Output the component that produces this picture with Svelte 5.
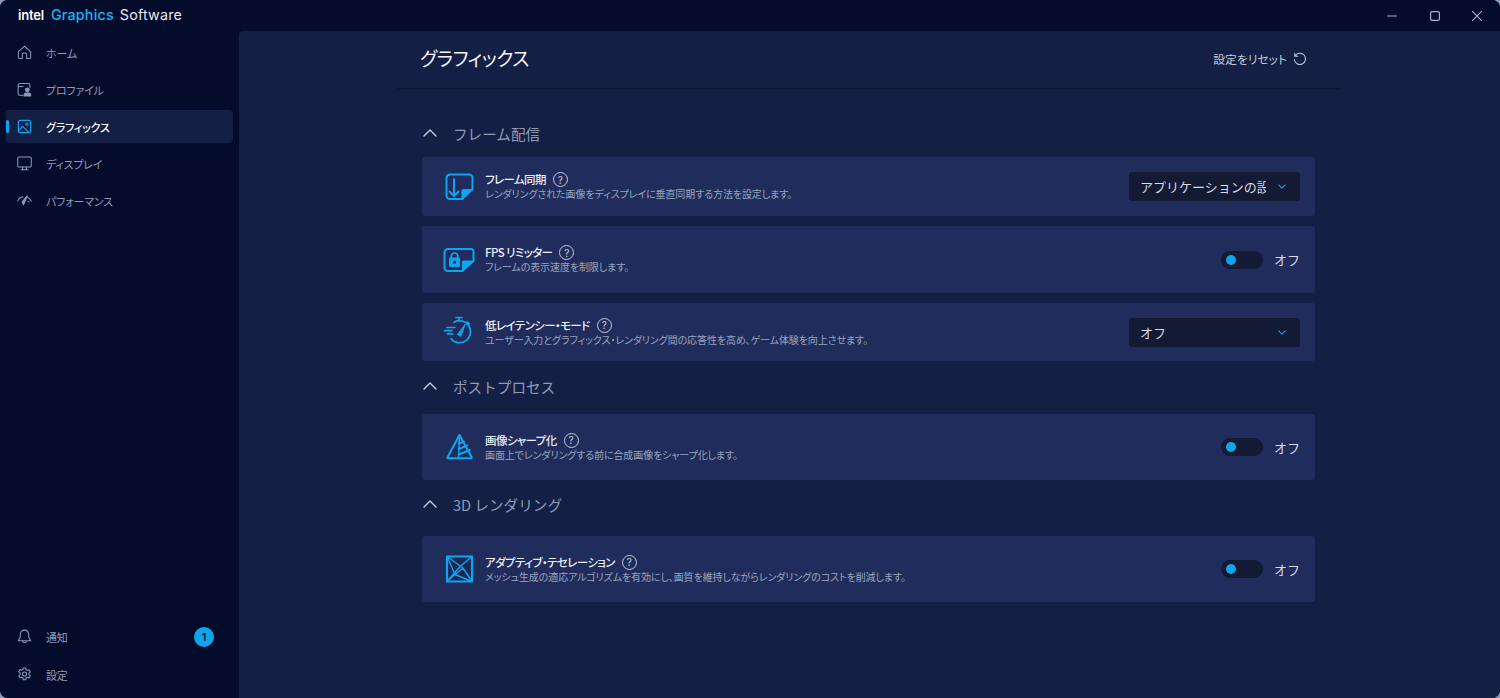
<script lang="ts">
  const nav = [
    { id: 'home', label: 'ホーム' },
    { id: 'profile', label: 'プロファイル' },
    { id: 'graphics', label: 'グラフィックス', active: true },
    { id: 'display', label: 'ディスプレイ' },
    { id: 'perf', label: 'パフォーマンス' }
  ];

  const sections = [
    {
      title: 'フレーム配信',
      rows: [
        { icon: 'sync', name: 'フレーム同期', desc: 'レンダリングされた画像をディスプレイに垂直同期する方法を設定します。', select: 'アプリケーションの設', h: 'h59' },
        { icon: 'fps', name: 'FPS リミッター', desc: 'フレームの表示速度を制限します。', h: 'h67' },
        { icon: 'latency', name: '低レイテンシー・モード', desc: 'ユーザー入力とグラフィックス・レンダリング間の応答性を高め、ゲーム体験を向上させます。', select: 'オフ', h: 'h58' }
      ]
    },
    {
      title: 'ポストプロセス',
      rows: [{ icon: 'sharp', name: '画像シャープ化', desc: '画面上でレンダリングする前に合成画像をシャープ化します。', h: 'h66' }]
    },
    {
      title: '3D レンダリング',
      rows: [{ icon: 'tess', name: 'アダプティブ・テセレーション', desc: 'メッシュ生成の適応アルゴリズムを有効にし、画質を維持しながらレンダリングのコストを削減します。', h: 'h66' }]
    }
  ];
</script>

{#snippet navIcon(id)}
  <svg class="nav-icon" viewBox="0 0 16 16" fill="none" stroke="currentColor" stroke-width="1.1" stroke-linejoin="round" stroke-linecap="round">
    {#if id === 'home'}
      <path d="M1.5 7 8 1.2 14.5 7v6.3a1.2 1.2 0 0 1-1.2 1.2H10.300V10a1.500 1.500 0 0 0-1.500-1.500H7.200A1.500 1.500 0 0 0 5.700 10v4.500H2.700a1.200 1.200 0 0 1-1.200-1.200z" />
    {:else if id === 'profile'}
      <path d="M6.500 14.200H3a1.800 1.800 0 0 1-1.800-1.800V3.500A1.800 1.800 0 0 1 3 1.700h9a1.800 1.800 0 0 1 1.800 1.800v2.200M1.200 4.700h5.300" />
      <circle cx="11" cy="8.300" r="2" fill="currentColor" />
      <path d="M7.600 14.800v-1.300c0-1 .8-1.800 1.800-1.800h3.400c1 0 1.800.8 1.800 1.800v1.300z" fill="currentColor" />
    {:else if id === 'graphics'}
      <rect x="1.500" y="1.500" width="13" height="13" rx="1.800" stroke-width="1.300" />
      <circle cx="10.500" cy="5.500" r="1.200" />
      <path d="M1.800 12 6 7.800l6.700 6.500" stroke-width="1.300" />
    {:else if id === 'display'}
      <rect x="0.800" y="1" width="14.400" height="10.800" rx="1.500" />
      <path d="M6 11.800v2.700M10 11.800v2.700M4.300 14.700h7.400" />
    {:else if id === 'perf'}
      <path d="M0.800 8.500C2 6 4 4.300 6.500 4M10.500 4.200c2 .5 3.600 2 4.700 4.300" />
      <path d="M7 12.500 11 3 5.500 9.500z" fill="currentColor" />
      <path d="M13 9.500l-1.300-.7" />
    {/if}
  </svg>
{/snippet}

{#snippet rowIcon(id)}
  <svg class="row-icon" viewBox="0 0 32 32" fill="none" stroke="#0ea5ef" stroke-width="2" stroke-linejoin="round" stroke-linecap="round">
    {#if id === 'sync'}
      <path d="M19 28H7a3.500 3.500 0 0 1-3.500-3.500V7A3.500 3.500 0 0 1 7 3.500h19A3.500 3.500 0 0 1 29.500 7v11z" />
      <path d="M29.500 18.500h-9a1.500 1.500 0 0 0-1.500 1.500v8z" fill="#0ea5ef" stroke-width="1.200" />
      <path d="M11 8v17M6.500 20.500 11 25l4.500-4.500" />
    {:else if id === 'fps'}
      <path d="M19 27H5a3.500 3.500 0 0 1-3.500-3.500v-15A3.500 3.500 0 0 1 5 5h23a2.500 2.500 0 0 1 2.500 2.500V17z" />
      <path d="M30.500 17h-10a1 1 0 0 0-1 1v9z" fill="#0ea5ef" stroke-width="1.200" />
      <rect x="6" y="13.500" width="11" height="9.500" rx="1.300" fill="#0ea5ef" stroke="none" />
      <path d="M8.300 14v-1.800a3.200 3.200 0 0 1 6.400 0V14" stroke-width="1.700" />
      <circle cx="11.500" cy="18.200" r="1.500" fill="#202d5c" stroke="none" />
    {:else if id === 'latency'}
      <path d="M13 1.500h6M16 1.500v3.500M24.500 6l1.800 1.800M11 6.200A11 11 0 1 1 8 22.700" stroke-width="1.700" />
      <path d="M4 11.500h8M1.500 14.700h7.500M4.500 17.800h5" stroke-width="1.700" />
      <path d="M22 8.500 14.500 18.500l3 1.800z" fill="#0ea5ef" stroke-width="1" />
    {:else if id === 'sharp'}
      <path d="M16.500 4 4.500 26.300a.7.7 0 0 0 .6 1h23a.7.7 0 0 0 .6-1z" />
      <path d="M16.500 4 15.500 27" stroke-width="1.500" />
      <path d="M16 12.500l5-2M16 18l8.300-3.500M15.800 23.500l11-4.500" stroke-width="1.900" />
    {:else if id === 'tess'}
      <rect x="4" y="3.500" width="25" height="25" fill="#1b2753" stroke-width="2.200" />
      <path d="M4 3.500 20 15 29 28.500M29 3.500 17 13.500 4 28.500M4 3.500 12 21.500 29 28.500M4 28.500 12 21.500 20 15" stroke-width="1.400" />
    {/if}
  </svg>
{/snippet}

{#snippet help()}
  <span class="help">?</span>
{/snippet}

<div class="window">
  <aside class="sidebar">
    <div class="brand">
      <span class="intel">intel</span>
      <span class="graphics">Graphics</span>
      <span class="software">Software</span>
    </div>
    <nav class="nav">
      {#each nav as item}
        <div class="nav-item" class:active={item.active}>
          {@render navIcon(item.id)}
          <span>{item.label}</span>
        </div>
      {/each}
    </nav>
    <div class="nav bottom">
      <div class="nav-item">
        <svg class="nav-icon" viewBox="0 0 16 16" fill="none" stroke="currentColor" stroke-width="1.100" stroke-linejoin="round" stroke-linecap="round">
          <path d="M8 1.200c-2.800 0-4.500 2-4.500 4.600v3L1.300 12.500h13.400L12.500 8.800v-3C12.500 3.200 10.800 1.200 8 1.200zM6 12.700a2 2 0 0 0 4 0" />
        </svg>
        <span>通知</span>
        <span class="badge">1</span>
      </div>
      <div class="nav-item">
        <svg class="nav-icon" viewBox="0 0 16 16" fill="none" stroke="currentColor" stroke-width="1.100" stroke-linejoin="round">
          <path d="M6.700 1h2.600l.4 2 1.300.7 1.900-.7 1.300 2.300-1.500 1.300v1.500l1.500 1.300-1.300 2.300-1.900-.7-1.300.7-.4 2H6.700l-.4-2-1.300-.7-1.900.7-1.300-2.300 1.500-1.300V6.300L1.800 5l1.300-2.300 1.900.7 1.300-.7z" />
          <circle cx="8" cy="7.500" r="2.200" />
        </svg>
        <span>設定</span>
      </div>
    </div>
  </aside>

  <div class="right">
    <div class="titlebar">
      <svg viewBox="0 0 10 10" class="win"><path d="M0 5h10" /></svg>
      <svg viewBox="0 0 10 10" class="win"><rect x="0.600" y="0.600" width="8.800" height="8.800" rx="1.500" /></svg>
      <svg viewBox="0 0 10 10" class="win"><path d="M0 0l10 10M10 0 0 10" /></svg>
    </div>
    <main class="content">
      <header class="head">
        <h1>グラフィックス</h1>
        <button type="button" class="reset">
          設定をリセット
          <svg viewBox="0 0 16 16" width="15" height="15" fill="none" stroke="currentColor" stroke-width="1.100" stroke-linecap="round" stroke-linejoin="round">
            <path d="M3 2.500v3.200h3.200M3.200 5.500A6 6 0 1 1 2.500 9" />
          </svg>
        </button>
      </header>

      <div class="sections">
        {#each sections as section}
          <section class="section">
            <div class="section-title">
              <svg viewBox="0 0 14 8" width="14" height="8" fill="none" stroke="#c8d0e0" stroke-width="1.400" stroke-linecap="round" stroke-linejoin="round">
                <path d="M1 7l6-6 6 6" />
              </svg>
              <span>{section.title}</span>
            </div>
            {#each section.rows as row}
              <div class="card {row.h}">
                {@render rowIcon(row.icon)}
                <div class="text">
                  <div class="name">{row.name}{@render help()}</div>
                  <div class="desc">{row.desc}</div>
                </div>
                {#if row.select}
                  <div class="select">
                    <span class="select-value">{row.select}</span>
                    <svg viewBox="0 0 10 6" width="8" height="5" fill="none" stroke="#0ea5ef" stroke-width="1.300" stroke-linecap="round" stroke-linejoin="round"><path d="M1 1l4 4 4-4" /></svg>
                  </div>
                {:else}
                  <div class="toggle-wrap">
                    <span class="toggle"><span class="knob"></span></span>
                    <span>オフ</span>
                  </div>
                {/if}
              </div>
            {/each}
          </section>
        {/each}
      </div>
    </main>
  </div>
</div>

<style>
  :global(body) {
    margin: 0;
    background: #8a9bb5;
    font-family: "Noto Sans CJK JP", "Noto Sans", sans-serif;
  }

  .window {
    width: 1500px;
    height: 698px;
    display: grid;
    grid-template-columns: 239px 1fr;
    background: #050b2b;
    border-radius: 8px;
    overflow: hidden;
    font-feature-settings: "palt";
  }

  .sidebar {
    display: flex;
    flex-direction: column;
    background: #050b2b;
    min-height: 0;
  }

  .brand {
    height: 31px;
    padding-left: 18px;
    display: flex;
    align-items: center;
    gap: 6px;
    font-family: Inter, "Noto Sans", sans-serif;
    font-size: 14.300px;
    line-height: 1;
    letter-spacing: 0.2px;
  }

  .intel {
    color: #fff;
    font-size: 13px;
    font-weight: 600;
    letter-spacing: -0.2px;
    margin-right: 1px;
  }

  .graphics {
    color: #12b5f2;
    font-weight: 500;
  }

  .software {
    color: #e4e7ef;
  }

  .nav {
    display: flex;
    flex-direction: column;
    gap: 4px;
    padding: 5px 6px 0;
  }

  .nav.bottom {
    margin-top: auto;
    padding-top: 0;
    padding-bottom: 7px;
    gap: 5px;
  }

  .nav-item {
    position: relative;
    height: 33px;
    display: flex;
    align-items: center;
    gap: 14px;
    padding: 0 19px 0 11px;
    border-radius: 4px;
    color: #8f9bb5;
    font-size: 11px;
    letter-spacing: -0.2px;
  }

  .nav-item.active {
    background: #141f45;
    color: #f2f4f8;
    font-weight: 500;
  }

  .nav-item.active::before {
    content: "";
    position: absolute;
    left: 0;
    top: 10px;
    width: 3px;
    height: 13px;
    border-radius: 2px;
    background: #0ea5ef;
  }

  .nav-item.active .nav-icon {
    color: #0ea5ef;
  }

  .nav-icon {
    width: 15px;
    height: 15px;
    flex: none;
  }

  .badge {
    margin-left: auto;
    width: 20px;
    height: 20px;
    border-radius: 50%;
    background: #0ea5ef;
    color: #05102e;
    display: grid;
    place-items: center;
    font-family: Inter, sans-serif;
    font-size: 11px;
    font-weight: 600;
  }

  .right {
    display: flex;
    flex-direction: column;
    min-width: 0;
  }

  .titlebar {
    height: 31px;
    flex: none;
    display: flex;
    justify-content: flex-end;
    align-items: center;
    gap: 32.500px;
    padding-right: 18px;
    background: #050b2b;
  }

  .win {
    width: 10px;
    height: 10px;
    fill: none;
    stroke: #a6b0c6;
    stroke-width: 1.200;
  }

  .content {
    flex: 1;
    background: #141f45;
    padding: 0 160px 0 158px;
    border-top-left-radius: 4px;
  }

  .head {
    height: 57px;
    display: flex;
    align-items: center;
    justify-content: space-between;
    padding: 0 33px 0 23px;
    border-bottom: 1px solid #0f1836;
  }

  h1 {
    margin: -5px 0 0;
    font-size: 19px;
    font-weight: 400;
    letter-spacing: -0.5px;
    color: #f2f4f8;
  }

  .reset {
    display: flex;
    align-items: center;
    gap: 5px;
    padding: 0;
    border: none;
    background: none;
    color: #c3cadb;
    font: inherit;
    font-size: 11.800px;
    font-feature-settings: "palt";
    margin-top: -2px;
  }

  .sections {
    padding: 29px 25px 0;
  }

  .section {
    display: flex;
    flex-direction: column;
    gap: 10px;
    margin-bottom: 10px;
  }

  .section:nth-child(2) {
    margin-bottom: 9px;
  }

  .section:nth-child(1) .section-title {
    margin-bottom: -1px;
  }

  .section:nth-child(2) .section-title {
    margin-bottom: 3px;
  }

  .section:nth-child(3) .section-title {
    margin-bottom: 7px;
  }

  .section-title {
    height: 30px;
    display: flex;
    align-items: center;
    gap: 16px;
    padding-left: 1px;
    color: #8f9bb5;
    font-size: 14.600px;
    font-feature-settings: normal;
  }

  .card {
    display: flex;
    align-items: center;
    padding: 0 15px 0 21px;
    background: #202d5c;
    border-radius: 3px;
  }

  .card.h58 {
    height: 58px;
  }

  .card.h59 {
    height: 59px;
  }

  .card.h66 {
    height: 66px;
  }

  .card.h67 {
    height: 67px;
  }

  .row-icon {
    width: 32px;
    height: 32px;
    flex: none;
  }

  .text {
    margin-left: 10px;
    flex: 1;
    min-width: 0;
    line-height: 15px;
  }

  .name {
    display: flex;
    align-items: center;
    gap: 7px;
    color: #e9ecf3;
    font-size: 11.500px;
    font-weight: 500;
    letter-spacing: -0.600px;
  }

  .desc {
    margin-top: -1px;
    color: #98a4bf;
    font-size: 10px;
    letter-spacing: -0.100px;
  }

  .help {
    width: 13px;
    height: 13px;
    border: 1px solid #c3cadb;
    border-radius: 50%;
    display: grid;
    place-items: center;
    color: #c3cadb;
    font-family: Inter, sans-serif;
    font-size: 10px;
    font-weight: 400;
    line-height: 1;
    letter-spacing: 0;
  }

  .select {
    width: 171px;
    height: 29px;
    box-sizing: border-box;
    padding: 0 14px 0 11px;
    display: flex;
    align-items: center;
    justify-content: space-between;
    background: #131a33;
    border-radius: 3px;
    color: #d7dbe5;
    font-size: 13px;
    font-feature-settings: normal;
  }

  .select-value {
    width: 126px;
    overflow: hidden;
    white-space: nowrap;
  }

  .toggle-wrap {
    display: flex;
    align-items: center;
    gap: 11px;
    color: #d7dbe5;
    font-size: 13px;
    font-feature-settings: normal;
  }

  .toggle {
    width: 42px;
    height: 18px;
    box-sizing: border-box;
    padding: 0 5px;
    display: flex;
    align-items: center;
    background: #131a33;
    border-radius: 9px;
  }

  .knob {
    width: 10px;
    height: 10px;
    border-radius: 50%;
    background: #0ea5ef;
  }
</style>
